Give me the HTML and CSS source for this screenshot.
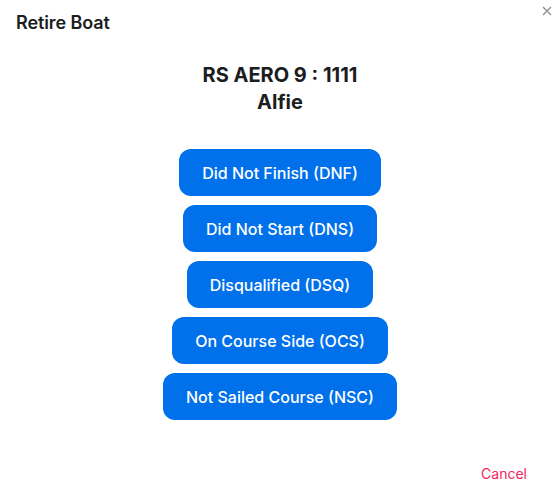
FILE: index.html
```html
<!DOCTYPE html>
<html>
<head>
<meta charset="utf-8">
<link rel="stylesheet" href="styles.css">
</head>
<body>
<div class="modal">
  <header class="modal-header">
    <h2 class="modal-title">Retire Boat</h2>
    <button class="close" aria-label="Close">
      <svg width="10" height="10" viewBox="0 0 10 10"><path d="M1 1L9 9M9 1L1 9" stroke="#8a8d93" stroke-width="1.3" fill="none"/></svg>
    </button>
  </header>
  <div class="boat">
    <div>RS AERO 9 : 1111</div>
    <div>Alfie</div>
  </div>
  <div class="actions">
    <button class="btn">Did Not Finish (DNF)</button>
    <button class="btn">Did Not Start (DNS)</button>
    <button class="btn">Disqualified (DSQ)</button>
    <button class="btn">On Course Side (OCS)</button>
    <button class="btn">Not Sailed Course (NSC)</button>
  </div>
  <footer class="modal-footer">
    <button class="cancel">Cancel</button>
  </footer>
</div>
</body>
</html>
```
FILE: styles.css
```css
* { box-sizing: border-box; }
html, body { margin: 0; background: #fff; }
body { font-family: Inter, "Noto Sans", sans-serif; color: #1b1d21; }
.modal { width: 560px; height: 496px; display: flex; flex-direction: column; position: relative; }
.modal-header { display: flex; justify-content: space-between; padding: 12px 16px 0 16px; height: 44px; align-items: flex-start; }
.modal-title { margin: 0; font-size: 18px; font-weight: 600; line-height: 22px; letter-spacing: -0.1px; }
.close { position: absolute; top: 6px; right: 6px; border: 0; background: none; padding: 0; width: 12px; height: 12px; display: flex; }
.boat { text-align: center; font-size: 20px; font-weight: 700; line-height: 27px; margin-top: 18px; }
.actions { display: flex; flex-direction: column; align-items: center; gap: 9px; margin-top: 33px; }
.btn { background: #0070eb; color: #fff; border: 0; border-radius: 12px; height: 47px; padding: 0 23px; font-family: Inter, sans-serif; font-size: 16px; font-weight: 500; }
.modal-footer { display: flex; justify-content: flex-end; padding: 0 33px 0 0; margin-top: 45px; }
.cancel { background: none; border: 0; padding: 0; color: #f2245f; font-family: Inter, sans-serif; font-size: 14px; }
```
